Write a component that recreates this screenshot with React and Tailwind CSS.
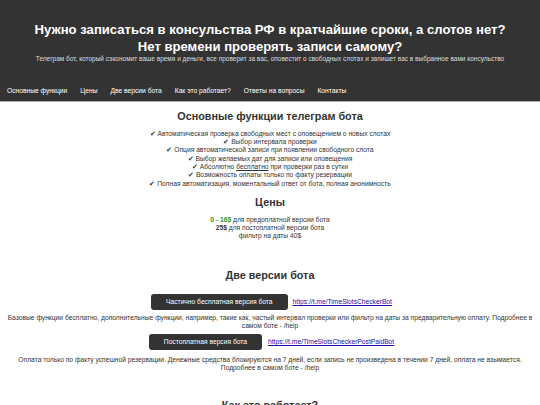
const features = [
  "Автоматическая проверка свободных мест с оповещением о новых слотах",
  "Выбор интервала проверки",
  "Опция автоматической записи при появлении свободного слота",
  "Выбор желаемых дат для записи или оповещения",
  null,
  "Возможность оплаты только по факту резервации",
  "Полная автоматизация, моментальный ответ от бота, полная анонимность",
];

const navItems = [
  "Основные функции",
  "Цены",
  "Две версии бота",
  "Как это работает?",
  "Ответы на вопросы",
  "Контакты",
];

const App = () => {
  return (
    <div className="min-h-[405px] bg-white text-[#333] [font-family:'Liberation_Sans',Arial,sans-serif]">
      {/* Header */}
      <header className="bg-[#333] text-white text-center pt-[20.5px] pb-[17.5px]">
        <h1 className="text-[13.1px] leading-[17px] font-bold">
          Нужно записаться в консульства РФ в кратчайшие сроки, а слотов нет?
          <br />
          Нет времени проверять записи самому?
        </h1>
        <p className="text-[6.5px] leading-[8px] text-[#ddd]">
          Телеграм бот, который сэкономит ваше время и деньги, все проверит за вас, оповестит о свободных слотах и запишет вас в выбранное вами консульство
        </p>
      </header>

      {/* Nav */}
      <nav className="bg-[#333] border-b border-[#aaa] flex gap-[13px] px-[7px] h-[22px] items-center">
        {navItems.map((item) => (
          <a key={item} href="#" className="text-white text-[6.7px] leading-[8px]">
            {item}
          </a>
        ))}
      </nav>

      {/* Features */}
      <section className="text-center pt-[7.5px]">
        <h2 className="text-[10.8px] leading-[13px] font-bold text-[#333]">
          Основные функции телеграм бота
        </h2>
        <ul className="mt-[7.3px] text-[6.7px] leading-[8.33px] text-[#333]">
          {features.map((f, i) =>
            f ? (
              <li key={i}>✔ {f}</li>
            ) : (
              <li key={i}>
                ✔ Абсолютно <span className="underline">бесплатно</span> при проверки раз в сутки
              </li>
            )
          )}
        </ul>
      </section>

      {/* Prices */}
      <section className="text-center pt-[8.3px]">
        <h2 className="text-[10.8px] leading-[13px] font-bold text-[#333]">Цены</h2>
        <div className="mt-[6.3px] text-[6.7px] leading-[8.33px]">
          <p>
            <span className="font-bold text-[#1f9a1f]">0 - 16$</span> для предоплатной версии бота
          </p>
          <p>
            <span className="font-bold">25$</span> для постоплатной версии бота
          </p>
          <p>фильтр на даты 40$</p>
        </div>
      </section>

      {/* Two versions */}
      <section className="text-center pt-[28.8px] px-[4px]">
        <h2 className="text-[10.8px] leading-[13px] font-bold text-[#333]">Две версии бота</h2>
        <div className="mt-[12px] flex items-center justify-center gap-[5px] pl-[3px]">
          <button className="bg-[#333] text-white text-[6.7px] leading-[8px] px-[15px] h-[16px] rounded-[3px]">
            Частично бесплатная версия бота
          </button>
          <a href="#" className="text-[#1a0dab] underline text-[6.7px] leading-[8px]">
            https://t.me/TimeSlotsCheckerBot
          </a>
        </div>
        <p className="mt-[4px] text-[6.7px] leading-[8px]">
          Базовые функции бесплатно, дополнительные функции, например, такие как, частый интервал проверки или фильтр на даты за предварительную оплату. Подробнее в самом боте - /help
        </p>
        <div className="mt-[4px] flex items-center justify-center gap-[6px] pl-[3px]">
          <button className="bg-[#333] text-white text-[6.7px] leading-[8px] px-[15px] h-[16px] rounded-[3px]">
            Постоплатная версия бота
          </button>
          <a href="#" className="text-[#1a0dab] underline text-[6.7px] leading-[8px]">
            https://t.me/TimeSlotsCheckerPostPaidBot
          </a>
        </div>
        <p className="mt-[6px] text-[6.7px] leading-[8px]">
          Оплата только по факту успешной резервации. Денежные средства блокируются на 7 дней, если запись не произведена в течении 7 дней, оплата не взымается. Подробнее в самом боте - /help
        </p>
      </section>

      {/* How it works */}
      <section className="text-center pt-[26.5px]">
        <h2 className="text-[10.8px] leading-[13px] font-bold text-[#333]">Как это работает?</h2>
      </section>
    </div>
  );
};

export default App;
